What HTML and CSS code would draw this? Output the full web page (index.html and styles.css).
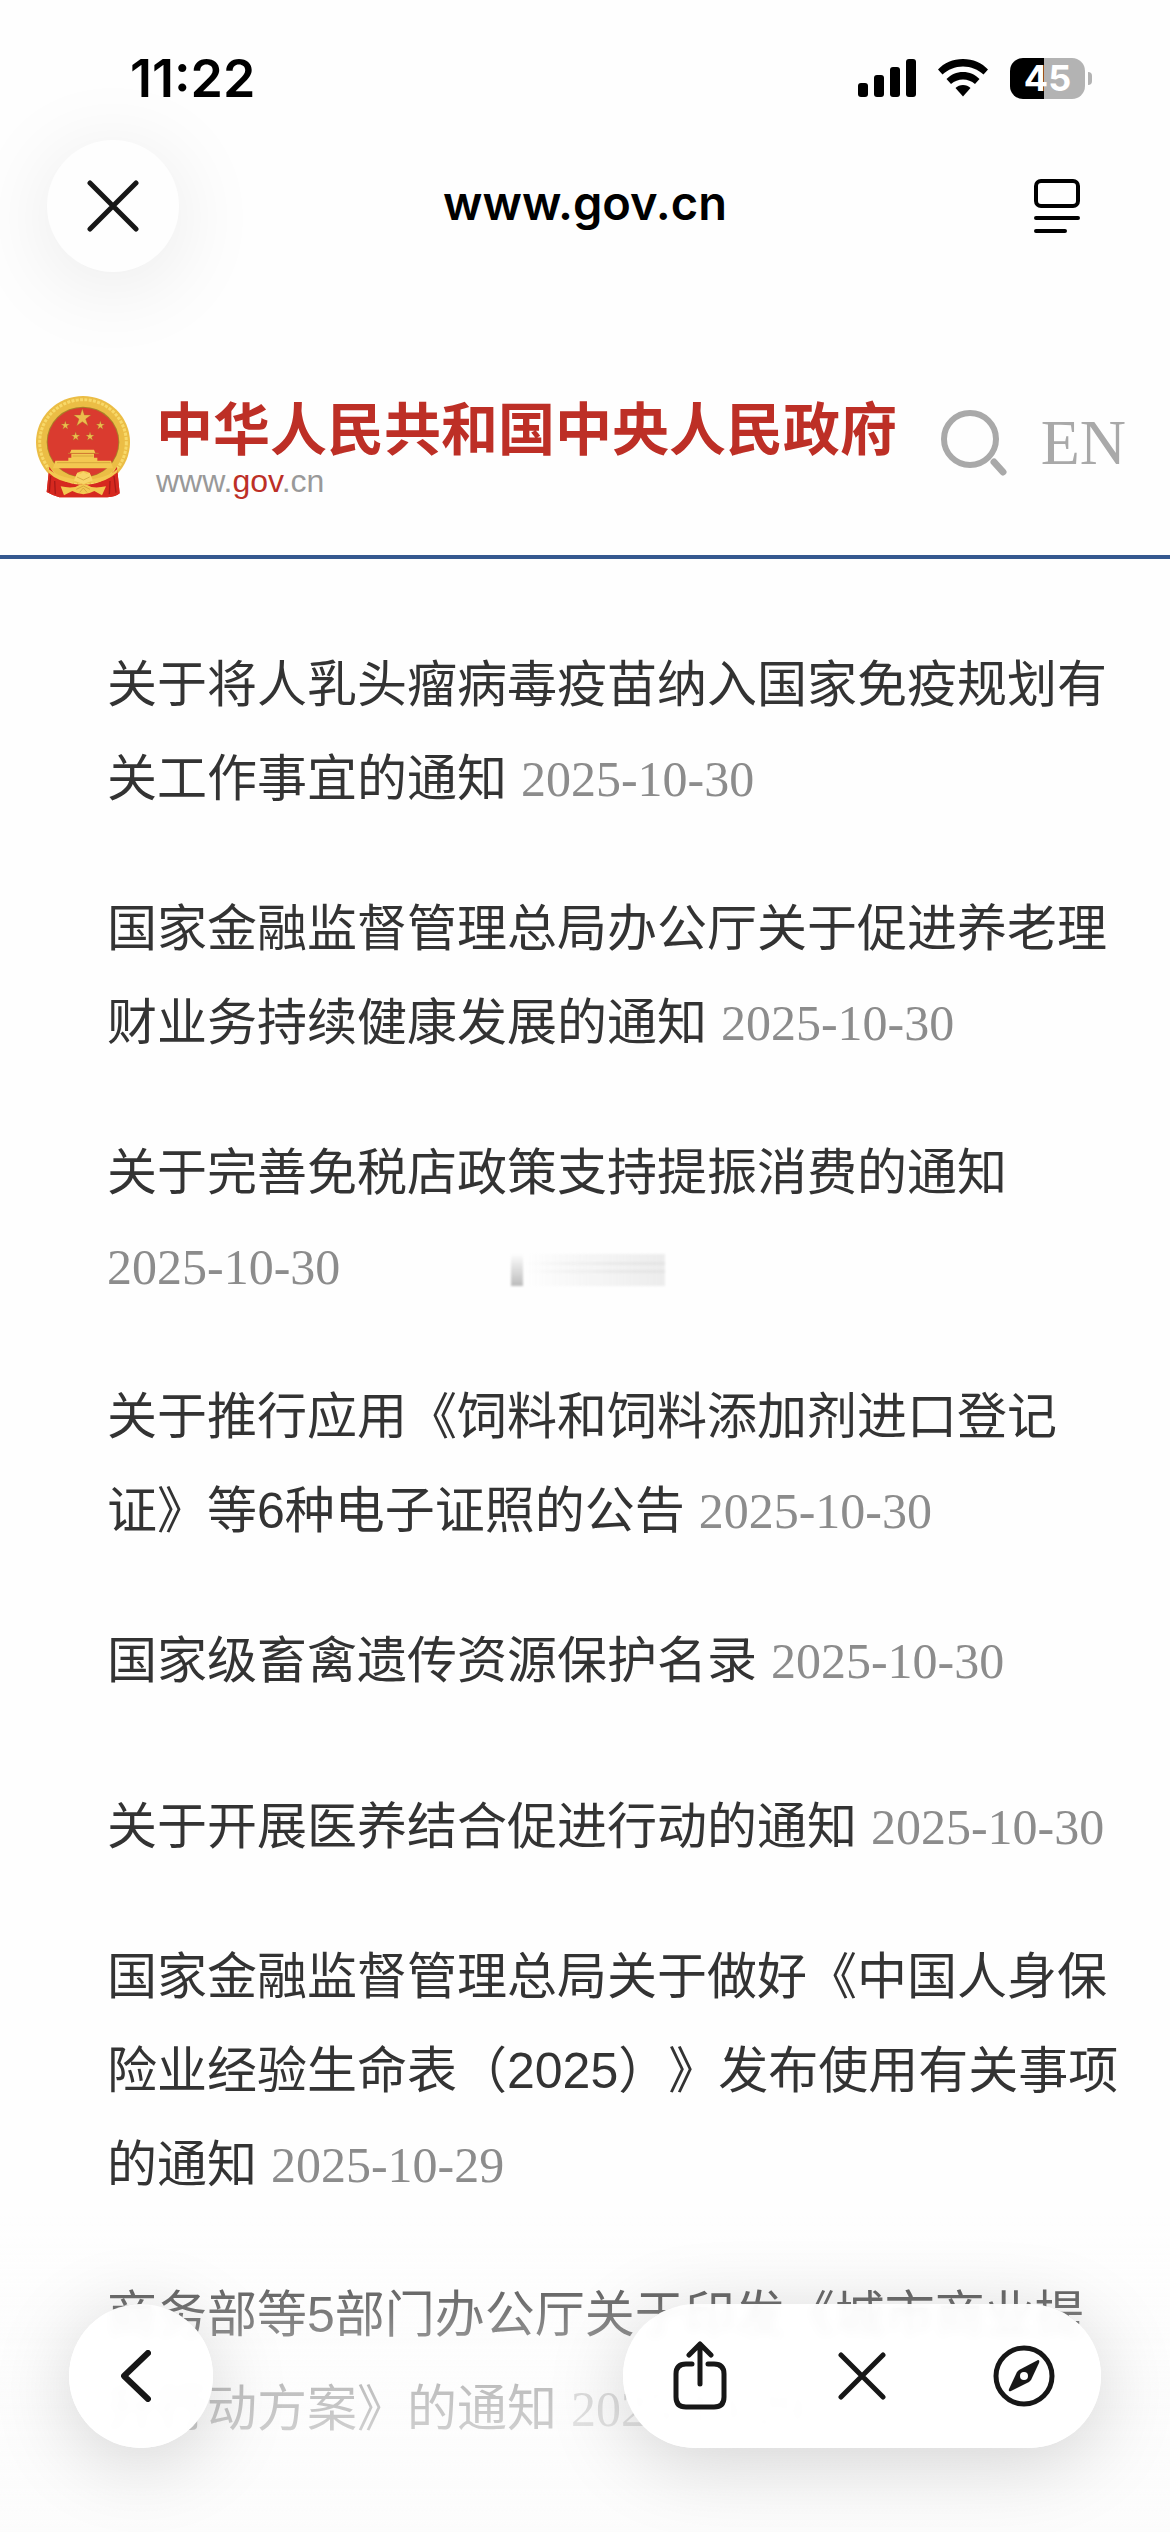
FILE: index.html
```html
<!DOCTYPE html>
<html lang="zh-CN">
<head>
    <meta charset="utf-8">
    <meta name="viewport" content="width=device-width, initial-scale=1">
    <title>www.gov.cn</title>
    <link rel="stylesheet" href="styles.css">
</head>
<body>
    <div class="status-bar">
        <span class="clock">11:22</span>
        <div class="status-icons">
            <svg width="58" height="38" viewBox="0 0 58 38">
                <rect x="0" y="24" width="10" height="14" rx="3"/>
                <rect x="16" y="16" width="10" height="22" rx="3"/>
                <rect x="32" y="8" width="10" height="30" rx="3"/>
                <rect x="48" y="0" width="10" height="38" rx="3"/>
            </svg>
            <svg width="50" height="38" viewBox="0 0 50 38">
                <path d="M25 0C35 0 44 4 50 10.500L45.500 15.500C40 10.500 33 7.500 25 7.500S10 10.500 4.500 15.500L0 10.500C6 4 15 0 25 0Z"/>
                <path d="M25 13C31.500 13 37 15.500 41.500 20L37 25C33.500 22 29.500 20.500 25 20.500S16.500 22 13 25L8.500 20C13 15.500 18.500 13 25 13Z"/>
                <path d="M25 26C28 26 30.500 27 32.500 29L25 37.500L17.500 29C19.500 27 22 26 25 26Z"/>
            </svg>
            <div class="battery"><span class="battery-level">45</span></div>
        </div>
    </div>

    <nav class="nav-bar">
        <button class="round-button" aria-label="关闭">
            <svg width="52" height="52" viewBox="0 0 52 52" class="line-icon">
                <path d="M3 3L49 49M49 3L3 49"/>
            </svg>
        </button>
        <span class="address">www.gov.cn</span>
        <button class="reader-button" aria-label="阅读">
            <svg width="46" height="54" viewBox="0 0 46 54" class="line-icon reader-icon">
                <rect x="2" y="2" width="42" height="25" rx="5"/>
                <path d="M2 39H44M2 52H31"/>
            </svg>
        </button>
    </nav>

    <header class="site-header">
        <svg class="emblem" width="94" height="102" viewBox="48 50 282 306">
            <path d="M88 262L80 338Q98 348 118 354H262Q288 352 299 342L291 262Z" fill="#d6281f"/>
            <ellipse cx="189" cy="189" rx="141" ry="139" fill="#ebbd45"/>
            <ellipse cx="189" cy="189" rx="130" ry="128" fill="none" stroke="#f8d969" stroke-width="9" stroke-dasharray="9 4"/>
            <path d="M88 262L80 338Q98 348 118 354H262Q288 352 299 342L291 262Q260 316 190 316T88 262Z" fill="#d6281f"/>
            <path d="M92 290L88 338M104 305L106 345M282 290L288 340M270 305L268 345" stroke="#a81a18" stroke-width="4"/>
            <ellipse cx="189" cy="188" rx="109" ry="106" fill="#a97f28"/>
            <ellipse cx="189" cy="189" rx="106" ry="104" fill="#da3b2f"/>
            <g fill="#edbd4c" stroke="#a8672a" stroke-width="1">
                <path d="M187 88L193 107H213L197 119L204 139L187 127L170 139L177 119L161 107H181Z"/>
                <path id="star" d="M136 124L139 134L149 134L141 140L144 150L136 144L128 150L131 140L123 134L133 134Z"/>
                <use href="#star" x="105"/>
                <use href="#star" x="31" y="33"/>
                <use href="#star" x="74" y="33"/>
            </g>
            <g fill="#f3c851">
                <path d="M154 211H222L226 221H150ZM154 223H222V235H154ZM145 235H232V246H145ZM106 244H273L279 267H99Z"/>
                <path d="M82 266Q108 290 162 300L172 280Q190 270 208 280L218 300Q272 290 296 266L290 280Q258 308 218 310L206 302H172L160 310Q115 308 86 280Z"/>
                <path d="M162 304L172 280L181 284L190 277L200 284L209 280L218 304L190 314Z" fill="#f8d568"/>
                <path d="M122 321Q145 326 166 323Q189 306 214 323Q234 326 258 321L246 348L223 335Q190 354 157 335L132 348Z"/>
            </g>
            <path d="M144 222H236M158 230H220M111 250H271M171 293L190 302L209 293M169 330L190 320L210 330M179 339L190 326L201 339" fill="none" stroke="#c99732" stroke-width="2"/>
        </svg>
        <div class="site-name">
            <h1>中华人民共和国中央人民政府</h1>
            <p>www.<b>gov</b>.cn</p>
        </div>
        <div class="site-actions">
            <button class="search-button" aria-label="搜索">
                <svg width="66" height="67" viewBox="0 0 66 67" fill="none" stroke="#a9a9a9">
                    <circle cx="29" cy="30" r="26" stroke-width="6"/>
                    <path d="M53 53L62 63" stroke-width="7" stroke-linecap="round"/>
                </svg>
            </button>
            <a class="lang" href="#">EN</a>
        </div>
    </header>

    <main>
        <ul class="news">
            <li><a href="#">关于将人乳头瘤病毒疫苗纳入国家免疫规划有关工作事宜的通知</a> <time>2025-10-30</time></li>
            <li><a href="#">国家金融监督管理总局办公厅关于促进养老理财业务持续健康发展的通知</a> <time>2025-10-30</time></li>
            <li><a href="#">关于完善免税店政策支持提振消费的通知</a> <time>2025-10-30</time><span class="smudge"></span></li>
            <li><a href="#">关于推行应用《饲料和饲料添加剂进口登记证》等6种电子证照的公告</a> <time>2025-10-30</time></li>
            <li><a href="#">国家级畜禽遗传资源保护名录</a> <time>2025-10-30</time></li>
        </ul>
        <ul class="news">
            <li><a href="#">关于开展医养结合促进行动的通知</a> <time>2025-10-30</time></li>
            <li><a href="#">国家金融监督管理总局关于做好《中国人身保险业经验生命表（2025）》发布使用有关事项的通知</a> <time>2025-10-29</time></li>
            <li><a href="#">商务部等5部门办公厅关于印发《城市商业提升行动方案》的通知</a> <time>2025-10-29</time></li>
        </ul>
    </main>

    <div class="toolbar">
        <button class="tool back" aria-label="返回">
            <svg width="30" height="52" viewBox="0 0 30 52" class="line-icon bold-icon">
                <path d="M27 3L3 26L27 49"/>
            </svg>
        </button>
        <div class="tool-group">
            <button class="tool" aria-label="分享">
                <svg width="54" height="70" viewBox="0 0 54 70" class="line-icon">
                    <path d="M19 23H13Q3 23 3 33V56Q3 66 13 66H41Q51 66 51 56V33Q51 23 41 23H35M27 43V3M16 14L27 3L38 14"/>
                </svg>
            </button>
            <button class="tool" aria-label="停止">
                <svg width="48" height="48" viewBox="0 0 48 48" class="line-icon">
                    <path d="M3 3L45 45M45 3L3 45"/>
                </svg>
            </button>
            <button class="tool" aria-label="在浏览器中打开">
                <svg width="62" height="62" viewBox="0 0 62 62">
                    <circle cx="31" cy="31" r="28" fill="none" stroke="#171717" stroke-width="5"/>
                    <path d="M45 15Q47 15 46 18L38 35L36 37L18 46Q15 47 16 44L24 27L26 25Z" fill="#171717"/>
                    <circle cx="31" cy="31" r="4" fill="#fff"/>
                </svg>
            </button>
        </div>
    </div>
</body>
</html>
```
FILE: styles.css
```css
* {
    box-sizing: border-box;
}

html {
    color: #333;
    background: #fefefe;
    font-family: "Liberation Sans", "Noto Sans CJK SC", sans-serif;
    font-size: 50px;
}

body {
    margin: 0;
    min-height: 100vh;
    overflow-x: hidden;
}

button {
    display: flex;
    justify-content: center;
    align-items: center;
    padding: 0;
    border: 0;
    background: none;
    cursor: pointer;
}

a {
    color: inherit;
    text-decoration: none;
}

svg {
    display: block;
}

.line-icon {
    fill: none;
    stroke: #171717;
    stroke-width: 5;
    stroke-linecap: round;
    stroke-linejoin: round;
}

.bold-icon {
    stroke-width: 6;
}

.reader-icon {
    stroke: #000;
    stroke-width: 4;
}

/* --- Status bar --- */
.status-bar {
    display: flex;
    justify-content: space-between;
    align-items: center;
    height: 140px;
    padding: 16px 78px 0 130px;
    color: #000;
    font-family: Inter, sans-serif;
    font-size: 52px;
    font-weight: 600;
}

.status-icons {
    display: flex;
    align-items: center;
    gap: 22px;
}

.battery {
    position: relative;
    width: 75px;
    height: 41px;
    margin-right: 7px;
    border-radius: 13px;
    background: linear-gradient(to right, #000 45%, #b3b3b3 45%);
    color: #fff;
    font-size: 36px;
    font-weight: 700;
    line-height: 41px;
    text-align: center;
}

.battery::after {
    position: absolute;
    content: "";
    top: 14px;
    right: -7px;
    width: 4px;
    height: 13px;
    border-radius: 0 6px 6px 0;
    background: #b3b3b3;
}

/* --- Browser bar --- */
.nav-bar {
    display: flex;
    justify-content: space-between;
    align-items: center;
    height: 132px;
    padding: 0 47px;
}

.round-button,
.reader-button {
    width: 132px;
    height: 132px;
    border-radius: 50%;
}

.round-button {
    background: #fefefe;
    box-shadow: 0 12px 90px rgba(0, 0, 0, .09);
}

.address {
    padding-bottom: 8px;
    color: #000;
    font-family: Inter, sans-serif;
    font-size: 47px;
    font-weight: 600;
}

/* --- Site header --- */
.site-header {
    display: flex;
    align-items: center;
    margin-top: 54px;
    height: 233px;
    padding: 12px 44px 0 36px;
    border-bottom: 4px solid #35588f;
}

.site-name {
    flex: 1;
    margin-left: 26px;
    padding-top: 8px;
    white-space: nowrap;
}

h1 {
    margin: 0;
    color: #bd2f26;
    font-size: 57px;
    line-height: 60px;
}

.site-name p {
    margin: 0;
    color: #999;
    font-size: 32px;
    line-height: 42px;
}

.site-name b {
    color: #bd2f26;
    font-weight: 400;
}

.site-actions {
    display: flex;
    align-items: center;
    gap: 34px;
    padding-bottom: 8px;
}

.lang {
    color: #a9a9a9;
    font-family: "Liberation Serif", serif;
    font-size: 64px;
}

/* --- News list --- */
main {
    display: grid;
    gap: 72px;
    padding: 79px 43px 60px 107px;
}

.news {
    display: grid;
    gap: 56px;
    margin: 0;
    padding: 0;
    list-style: none;
    line-height: 94px;
    text-spacing-trim: space-all;
}

.news li {
    position: relative;
}

.news time {
    color: #8c8c8c;
    font-family: "Liberation Serif", serif;
}

.smudge {
    position: absolute;
    left: 404px;
    bottom: 28px;
    width: 154px;
    height: 32px;
    background:
        linear-gradient(to bottom, transparent, #bbb) 0 0 / 12px 100% no-repeat,
        linear-gradient(to right, transparent 10%, #e4e4e4) 0 8px / 100% 3px no-repeat,
        linear-gradient(to right, transparent 10%, #e4e4e4) 0 16px / 100% 3px no-repeat,
        linear-gradient(to right, transparent 10%, #ececec) 0 0 / 100% 100% no-repeat;
    filter: blur(1px);
}

/* --- Bottom toolbar --- */
.toolbar {
    position: fixed;
    left: 0;
    right: 0;
    bottom: 0;
    display: flex;
    justify-content: space-between;
    align-items: flex-end;
    height: 320px;
    padding: 0 69px 84px;
    background: linear-gradient(to bottom, rgba(252, 252, 252, 0), rgba(252, 252, 252, .3) 28%, rgba(252, 252, 252, .7) 55%, rgba(252, 252, 252, .95));
}

.back,
.tool-group {
    height: 144px;
    border-radius: 72px;
    background: rgba(255, 255, 255, .93);
    box-shadow: 0 14px 80px rgba(0, 0, 0, .17);
    backdrop-filter: blur(5px);
}

.tool.back {
    width: 144px;
    padding-right: 10px;
}

.tool-group {
    display: flex;
    justify-content: space-between;
    align-items: center;
    width: 478px;
    padding: 0 46px;
}

.tool {
    width: 62px;
}
```
